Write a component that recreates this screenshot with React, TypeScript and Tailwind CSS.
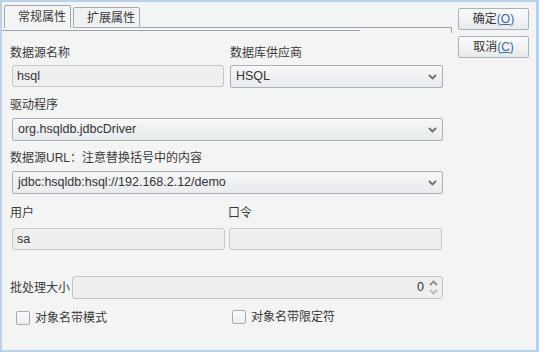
const font = "font-['Liberation_Sans','Noto_Sans_CJK_SC',sans-serif]";

function Chevron({ up = false, color = '#6f6f6f' }: { up?: boolean; color?: string }) {
  return (
    <svg width="9" height="6" viewBox="0 0 9 6" fill="none" stroke={color} strokeWidth="1.8">
      {up ? <polyline points="1 5 4.5 1.5 8 5" /> : <polyline points="1 1 4.5 4.5 8 1" />}
    </svg>
  );
}

function Select({ value, className = '' }: { value: string; className?: string }) {
  return (
    <div
      className={`h-[23px] flex items-center justify-between pl-[5px] pr-[5px] border border-[#a8afb6] rounded-[2px] bg-linear-to-b from-[#f6f7f8] via-[#eef0f2] to-[#e9ecee] text-[12.5px] text-[#333] ${className}`}
    >
      <span>{value}</span>
      <Chevron />
    </div>
  );
}

function Input({ value = '', className = '' }: { value?: string; className?: string }) {
  return (
    <div
      className={`h-[22px] flex items-center pl-[4px] border border-[#c4c8cc] rounded-[3px] bg-[#eef0f0] text-[12.5px] text-[#333] ${className}`}
    >
      {value}
    </div>
  );
}

function Check({ label }: { label: string }) {
  return (
    <div className="flex items-center gap-[5px]">
      <div className="w-[14px] h-[14px] border border-[#a3abb3] rounded-[2px] bg-linear-to-b from-[#fbfbfc] to-[#eceef0]" />
      <span>{label}</span>
    </div>
  );
}

function Button({ text, key_ }: { text: string; key_: string }) {
  return (
    <div className="w-[71px] h-[22px] flex items-center justify-center border border-[#a9b1b9] rounded-[2px] bg-linear-to-b from-[#fbfbfc] to-[#e7eaed] text-[12px] text-[#333]">
      {text}
      <span className="text-[#3a68a6]">
        (<span className="underline">{key_}</span>)
      </span>
    </div>
  );
}

export default function App() {
  return (
    <div
      className={`${font} w-[539px] h-[352px] flex border-t-2 border-l-2 border-r-[3px] border-b-2 border-[#b9d1ea] bg-[#f3f4f4] text-[12px] text-[#3a3a3a]`}
    >
      {/* Tabs + form */}
      <div className="w-[450px] flex flex-col">
        <div className="flex items-end h-[26px] pl-[2px]">
          <div className="h-[23px] w-[67px] flex items-center pl-[13px] border-l border-t border-r border-[#9ca5ad] rounded-t-[2px] bg-[#f4f5f5]">
            常规属性
          </div>
          <div className="h-[21px] w-[67px] ml-[2px] flex items-center pl-[13px] border border-[#a4acb3] rounded-t-[2px] bg-[#eff1f2]">
            扩展属性
          </div>
          <div className="flex-1 h-full border-b border-[#9ca5ad]" />
        </div>
        <div className="flex h-[5px]">
          <div className="w-[358px] mt-[2px] border-t border-[#9ca5ad]" />
          <div className="ml-auto h-full border-r border-[#9ca5ad]" />
        </div>

        {/* Form */}
        <div className="pl-[8px] pr-[9px]">
          <div className="mt-[11px] h-[16px] flex">
            <span className="w-[220px]">数据源名称</span>
            <span>数据库供应商</span>
          </div>
          <div className="mt-[5px] flex gap-[6px] pl-[2px]">
            <Input value="hsql" className="w-[212px]" />
            <Select value="HSQL" className="flex-1" />
          </div>

          <div className="mt-[8px] h-[16px]">驱动程序</div>
          <Select value="org.hsqldb.jdbcDriver" className="mt-[6px] ml-[2px]" />

          <div className="mt-[8px] h-[16px]">数据源URL：注意替换括号中的内容</div>
          <Select value="jdbc:hsqldb:hsql://192.168.2.12/demo" className="mt-[6px] ml-[2px]" />

          <div className="mt-[10px] h-[16px] flex">
            <span className="w-[218px]">用户</span>
            <span>口令</span>
          </div>
          <div className="mt-[8px] flex gap-[4px] pl-[2px] pr-[1px]">
            <Input value="sa" className="w-[213px]" />
            <Input className="flex-1" />
          </div>

          <div className="mt-[26px] flex items-center">
            <span className="w-[62px]">批处理大小</span>
            <div className="flex-1 h-[23px] flex items-center justify-end pr-[4px] border border-[#c0c5c9] rounded-[3px] bg-[#eef0f0]">
              <span className="text-[12.5px] text-[#333] mr-[5px]">0</span>
              <div className="flex flex-col gap-[3px]">
                <Chevron up color="#8a8a8a" />
                <Chevron color="#b8bcc0" />
              </div>
            </div>
          </div>

          <div className="mt-[10px] h-[16px] flex pl-[6px]">
            <div className="w-[216px]">
              <Check label="对象名带模式" />
            </div>
            <Check label="对象名带限定符" />
          </div>
        </div>
      </div>

      {/* Buttons */}
      <div className="flex flex-col gap-[6px] pt-[6px] pl-[6px]">
        <Button text="确定" key_="O" />
        <Button text="取消" key_="C" />
      </div>
    </div>
  );
}
